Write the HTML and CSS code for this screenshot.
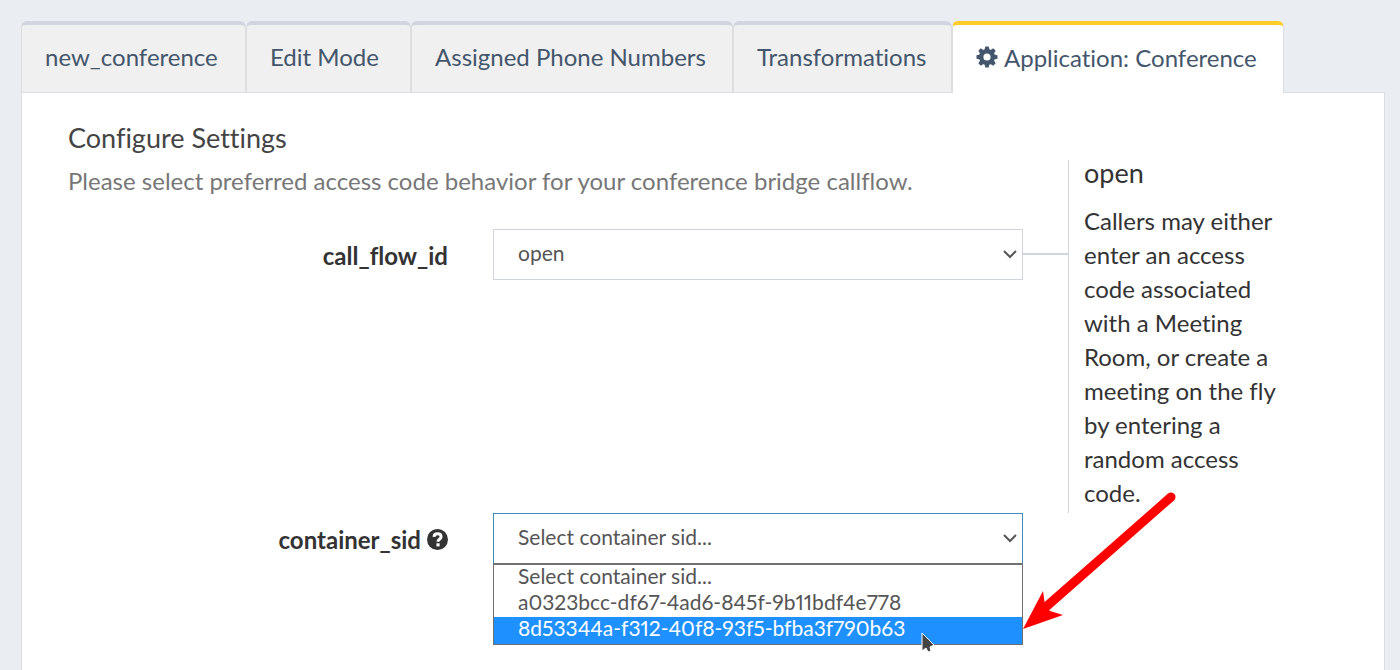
FILE: index.html
```html
<!DOCTYPE html>
<html lang="en">
<head>
    <meta charset="UTF-8">
    <meta name="viewport" content="width=device-width, initial-scale=1.0">
    <title>Application: Conference</title>
    <link rel="stylesheet" href="styles.css">
</head>
<body>
    <div class="container">
        <nav class="tabs">
            <a class="tab" href="#name">new_conference</a>
            <a class="tab" href="#edit">Edit Mode</a>
            <a class="tab" href="#numbers">Assigned Phone Numbers</a>
            <a class="tab" href="#transformations">Transformations</a>
            <a class="tab active" href="#application">
                <svg class="gear" viewBox="0 0 22 22" aria-hidden="true">
                    <g fill="currentColor">
                        <path id="tooth" d="M8.700 3L9.300 0.500h3.400L13.300 3v16l-.6 2.500H9.300L8.700 19z"/>
                        <use href="#tooth" transform="rotate(45 11 11)"/>
                        <use href="#tooth" transform="rotate(90 11 11)"/>
                        <use href="#tooth" transform="rotate(135 11 11)"/>
                        <circle cx="11" cy="11" r="8"/>
                    </g>
                    <circle cx="11" cy="11" r="3.6" fill="#fff"/>
                </svg>
                Application: Conference
            </a>
        </nav>

        <form class="panel">
            <div class="settings">
                <div class="settings-main">
                    <h1>Configure Settings</h1>
                    <p class="intro">Please select preferred access code behavior for your conference bridge callflow.</p>
                    <div class="field">
                        <label for="callFlow">call_flow_id</label>
                        <div class="select-wrap linked">
                            <select id="callFlow">
                                <option>open</option>
                            </select>
                            <svg class="chevron" viewBox="0 0 14 9" aria-hidden="true"><path d="M1 1l6 6 6-6"/></svg>
                        </div>
                    </div>
                </div>
                <aside class="help">
                    <h2>open</h2>
                    <p>Callers may either enter an access code associated with a Meeting Room, or create a meeting on the fly by entering a random access code.</p>
                </aside>
            </div>

            <div class="settings">
                <div class="field">
                    <label for="containerSid">container_sid
                        <svg class="question" viewBox="0 0 20 20" aria-hidden="true">
                            <circle cx="10" cy="10" r="10" fill="currentColor"/>
                            <path d="M6.6 7.600C6.800 5.400 8.200 4.600 10 4.600c2 0 3.400 1 3.400 2.800 0 2.400-3 2.300-3 4.800" fill="none" stroke="#fff" stroke-width="2.8"/>
                            <rect x="9" y="13.6" width="3" height="3" fill="#fff"/>
                        </svg>
                    </label>
                    <div class="select-wrap focused">
                        <select id="containerSid">
                            <option>Select container sid...</option>
                        </select>
                        <svg class="chevron" viewBox="0 0 14 9" aria-hidden="true"><path d="M1 1l6 6 6-6"/></svg>
                        <ul class="options" role="listbox" aria-label="container_sid">
                            <li role="option">Select container sid...</li>
                            <li role="option">a0323bcc-df67-4ad6-845f-9b11bdf4e778</li>
                            <li role="option" class="selected" aria-selected="true">8d53344a-f312-40f8-93f5-bfba3f790b63</li>
                        </ul>
                        <svg class="pointer" viewBox="0 0 16 22" aria-hidden="true">
                            <path d="M2 1v18l4-3 2 4 3-1-1-4 4-2z" fill="#444" stroke="#fff" stroke-width="1"/>
                        </svg>
                        <svg class="arrow" viewBox="0 0 156 142" aria-hidden="true">
                            <path d="M24 116L148 7" stroke="#f00" stroke-width="9" stroke-linecap="round"/>
                            <path d="M0 139l20-38 2 14 5 6 13 4z" fill="#f00"/>
                        </svg>
                    </div>
                </div>
            </div>
        </form>
    </div>
</body>
</html>
```

FILE: styles.css
```css
* {
    box-sizing: border-box;
    margin: 0;
    padding: 0;
}

body {
    background-color: #eaeef3;
    font-family: Lato, sans-serif;
    font-size: 24px;
    font-variant-ligatures: none;
    font-variant-numeric: proportional-nums;
    color: #333;
    min-height: 100vh;
    display: flex;
}

.container {
    flex: 1;
    min-width: 0;
    margin: 21px 15px 0 21px;
    display: flex;
    flex-direction: column;
}

/* tabs */
.tabs {
    display: grid;
    grid-template-columns: 225fr 165fr 322fr 219fr 332fr 101fr;
}

.tab {
    display: flex;
    align-items: center;
    gap: 6px;
    height: 71px;
    padding: 0 0 4px 23px;
    background-color: #f0f0f0;
    border: 1px solid #dcdde0;
    border-top: 4px solid #d1d5df;
    border-bottom: none;
    border-radius: 6px 6px 0 0;
    color: #44566c;
    text-decoration: none;
    white-space: nowrap;
}

.tab.active {
    position: relative;
    z-index: 1;
    height: 72px;
    margin-bottom: -1px;
    background-color: #fff;
    border-top-color: #ffcd2b;
}

.gear {
    width: 22px;
    height: 22px;
}

/* panel */
.panel {
    flex: 1;
    padding: 0 99px 24px 46px;
    background-color: #fff;
    border: 1px solid #dcdde0;
    border-bottom: none;
}

.settings {
    display: grid;
    grid-template-columns: 955fr 217fr;
    column-gap: 45px;
}

h1 {
    margin-top: 28px;
    font-size: 27px;
    font-weight: 400;
    line-height: 34px;
    color: #444;
}

.intro {
    margin: 9px 0 31px;
    line-height: 34px;
    color: #777;
}

.field {
    display: grid;
    grid-template-columns: 380fr 530fr;
    column-gap: 45px;
}

label {
    display: flex;
    align-items: center;
    justify-content: flex-end;
    gap: 6px;
    height: 52px;
    font-weight: 700;
}

.question {
    width: 21px;
    height: 21px;
}

.select-wrap {
    position: relative;
}

select {
    display: block;
    width: 100%;
    height: 51px;
    padding: 0 24px 5px;
    appearance: none;
    background-color: #fff;
    border: 1px solid #d0d4dd;
    font-family: inherit;
    font-size: 21px;
    color: #555;
}

.focused select {
    border-color: #3c8dbc;
}

/* connector between the select and its help text */
.linked::after {
    content: "";
    position: absolute;
    top: 24px;
    left: 100%;
    width: 45px;
    height: 2px;
    background-color: #d1d5df;
}

.chevron {
    position: absolute;
    top: 21px;
    right: 6px;
    width: 14px;
    height: 9px;
    fill: none;
    stroke: #555;
    stroke-width: 2;
    pointer-events: none;
}

.help {
    margin-top: 67px;
    padding-left: 15px;
    border-left: 1px solid #d1d5df;
}

h2 {
    margin-bottom: 18px;
    font-size: 27px;
    font-weight: 400;
    line-height: 26px;
}

.help p {
    line-height: 34px;
    padding-bottom: 3px;
}

/* open list */
.options {
    position: absolute;
    top: 50px;
    left: 0;
    width: 100%;
    list-style: none;
    background-color: #fff;
    border: 1px solid #707070;
    border-top-width: 2px;
    font-size: 21px;
    line-height: 22px;
    color: #555;
}

.options li {
    height: 26px;
    padding: 0 24px;
}

.options .selected {
    height: 27px;
    background-color: #1e90ff;
    color: #fff;
}

.pointer {
    position: absolute;
    top: 119px;
    left: 427px;
    width: 16px;
    height: 22px;
}

.arrow {
    position: absolute;
    top: -23px;
    left: 100%;
    width: 156px;
    height: 142px;
    fill: none;
}
```
